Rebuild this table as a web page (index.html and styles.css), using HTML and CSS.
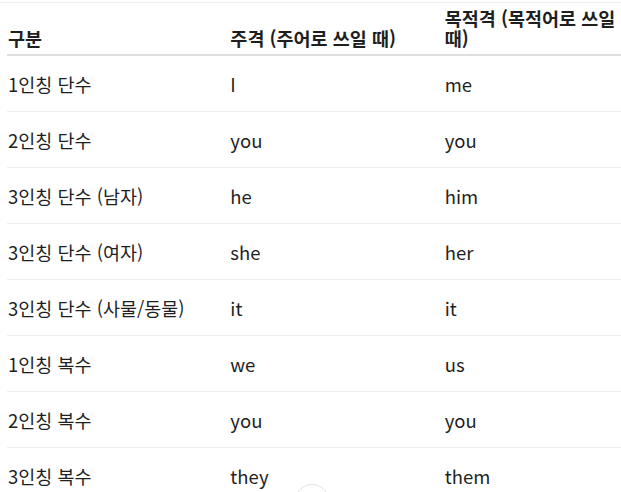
FILE: index.html
```html
<!DOCTYPE html>
<html lang="ko">
<head>
<meta charset="utf-8">
<link rel="stylesheet" href="styles.css">
</head>
<body>
<div class="wrap">
  <table class="pron">
    <thead>
      <tr><th class="c1">구분</th><th class="c2">주격 (주어로 쓰일 때)</th><th class="c3">목적격 (목적어로 쓰일 때)</th></tr>
    </thead>
    <tbody>
      <tr><td>1인칭 단수</td><td>I</td><td>me</td></tr>
      <tr><td>2인칭 단수</td><td>you</td><td>you</td></tr>
      <tr><td>3인칭 단수 (남자)</td><td>he</td><td>him</td></tr>
      <tr><td>3인칭 단수 (여자)</td><td>she</td><td>her</td></tr>
      <tr><td>3인칭 단수 (사물/동물)</td><td>it</td><td>it</td></tr>
      <tr><td>1인칭 복수</td><td>we</td><td>us</td></tr>
      <tr><td>2인칭 복수</td><td>you</td><td>you</td></tr>
      <tr><td>3인칭 복수</td><td>they</td><td>them</td></tr>
    </tbody>
  </table>
</div>
<div class="scroll-btn"></div>
</body>
</html>
```
FILE: styles.css
```css
html, body {
  margin: 0;
  padding: 0;
  background: #fff;
  overflow: hidden;
}
body {
  font-family: "Noto Sans CJK KR", "Noto Sans", sans-serif;
  color: #1f1f1f;
  font-size: 18.5px;
}
.wrap {
  margin-top: 2px;
  border-top: 1px solid #f0f0f0;
  padding-left: 7px;
}
.pron {
  border-collapse: collapse;
  table-layout: fixed;
  width: 616px;
}
.pron th {
  text-align: left;
  font-weight: 700;
  vertical-align: bottom;
  line-height: 20px;
  padding: 5px 0 6px 1px;
  border-bottom: 2px solid #dedede;
}
.pron .c1 { width: 221px; }
.pron .c2 { width: 213px; }
.pron .c3 { width: 178px; }
.pron td {
  height: 55px;
  padding: 0 0 0 1px;
  line-height: 22px;
  vertical-align: middle;
  border-bottom: 1px solid #efefef;
}
.scroll-btn {
  position: absolute;
  left: 295px;
  top: 484px;
  width: 32px;
  height: 32px;
  border: 1px solid #e2e2e2;
  border-radius: 50%;
  background: #fff;
}
```
